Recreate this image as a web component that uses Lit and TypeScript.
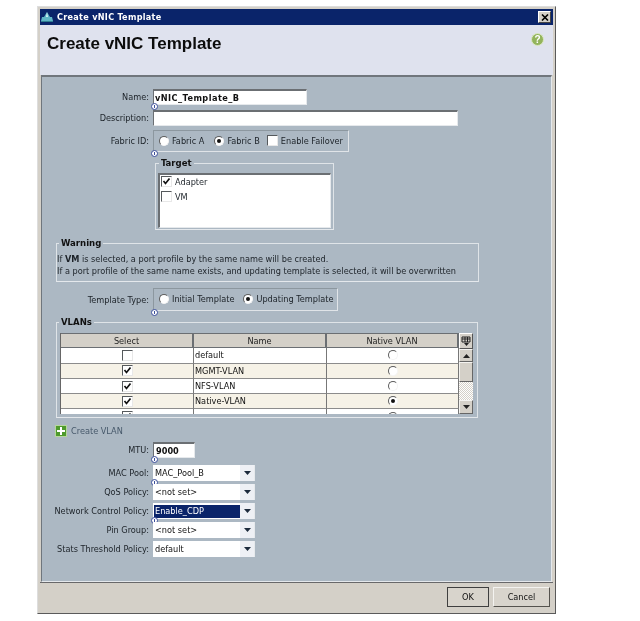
import { LitElement, html, css } from "lit";
import { customElement } from "lit/decorators.js";

@customElement("app-root")
export class AppRoot extends LitElement {
  static styles = css`
    :host { display: block; width: 640px; height: 621px; background: #fff; overflow: hidden;
      font-family: "DejaVu Sans Condensed", "DejaVu Sans", sans-serif; font-size: 9.1px; color: #1c2228; }
    * { box-sizing: border-box; }
    .wrap { padding: 6px 0 0 37px; filter: blur(0.35px); }
    .window { width: 519px; height: 608px; background: #d4d0c8; padding: 2px; display: flex; flex-direction: column;
      border: 1px solid; border-color: #ddd #5a5a5a #5a5a5a #ddd; }
    .title { height: 16px; flex: none; background: #0a246a; color: #fff; font-weight: 700; font-size: 9px;
      display: flex; align-items: center; gap: 4px; padding: 0 2px 0 1px; letter-spacing: .3px; }
    .title svg { flex: none; }
    .title span { flex: 1; }
    .close { width: 13px; height: 12px; background: #d4d0c8; border: 1px solid; border-color: #fff #444 #444 #fff;
      display: flex; align-items: center; justify-content: center; }
    .head { height: 50px; flex: none; background: #dfe2ee; display: flex; justify-content: space-between; padding: 8px 9px 0 7px; }
    h1 { margin: 1px 0 0; font: 700 17px/20px "Liberation Sans", Arial, sans-serif; color: #0c0c0c; }
    .panel { flex: 1; margin: 0 1px; background: #acb8c3; border-top: 2px solid #70767c; border-left: 1px solid #6f767d;
      border-right: 1px solid #e4e8ec; border-bottom: 1px solid #e4e8ec; padding-top: 12px; display: flex; flex-direction: column; }
    .footer { height: 29px; flex: none; background: #d4d0c8; border-top: 1px solid #68686a; display: flex;
      justify-content: flex-end; gap: 4px; padding: 4px 3px 0 0; }
    .btn { height: 20px; color: #111; display: flex; align-items: center; justify-content: center;
      background: #d8d4cc; border: 1px solid; border-color: #f4f3f0 #55534e #55534e #f4f3f0; }
    .ok { width: 42px; outline: 1px solid #3f3f3f; outline-offset: -1px; }
    .cancel { width: 57px; }

    .row { display: flex; align-items: center; flex: none; position: relative; }
    .label { width: 107px; margin-right: 4px; display: flex; justify-content: flex-end; white-space: nowrap; flex: none; }
    .field { height: 16px; background: #fff; padding-left: 1px; display: flex; align-items: center; color: #111;
      border-top: 2px solid #6b6f73; border-left: 1px solid #6b6f73; border-right: 1px solid #e6e9ec; border-bottom: 1px solid #e6e9ec; }
    .bold { font-weight: 700; }
    .w-name { width: 154px; letter-spacing: .45px; } .w-desc { width: 305px; } .w-mtu { width: 42px; padding-left: 2px; }
    .m5 { margin-top: 5px; } .m4 { margin-top: 4px; } .m3 { margin-top: 3px; } .m7 { margin-top: 7px; } .m6 { margin-top: 6px; }

    .info { position: absolute; left: 109px; bottom: -5px; width: 7px; height: 7px; border-radius: 50%;
      border: 1px solid #3c4f9c; background: #fff; }
    .info::after { content: ""; position: absolute; left: 2px; top: 1px; width: 1px; height: 3px; background: #3c4f9c; }

    .group { display: flex; align-items: center; border: 1px solid; border-color: #8c979f #e0e4e8 #e0e4e8 #8c979f;
      padding: 0 0 1px 5px; }
    .g-fabric { width: 196px; height: 22px; }
    .g-template { width: 185px; height: 23px; padding-bottom: 2px; }
    .opt { display: flex; align-items: center; gap: 3px; white-space: nowrap; }
    .g-fabric .opt:first-child { margin-right: 10px; }
    .g-fabric .opt:nth-child(2) { margin-right: 7px; }
    .g-template .opt { margin-right: 9px; }

    .radio { width: 10px; height: 10px; border-radius: 50%; background: #fff; flex: none; position: relative;
      border: 1px solid; border-color: #5c5c5c #f4f4f4 #f4f4f4 #5c5c5c; }
    .radio.on::after { content: ""; position: absolute; left: 2px; top: 2px; width: 4px; height: 4px; border-radius: 50%; background: #111; }
    .check { width: 11px; height: 11px; background: #fff; flex: none; display: block;
      border: 1px solid; border-color: #55595c #e8e8e8 #e8e8e8 #55595c; }
    .check svg { display: block; }

    fieldset { margin: 0; min-width: 0; border: 1px solid; border-color: #dfe4e8 #dfe4e8 #e4e8ec #dfe4e8; flex: none; }
    legend { padding: 0 2px; font-weight: 700; font-size: 9.5px; line-height: 12px; color: #111; }
    .target { margin: 5px 0 0 113px; width: 179px; height: 73px; padding: 4px 2px 0; }
    .target legend { margin-left: 1px; }
    .list { height: 55px; background: #fff; padding: 1px 1px; display: flex; flex-direction: column; gap: 4px;
      border-top: 2px solid #6b6f73; border-left: 2px solid #6b6f73; border-right: 1px solid #e6e9ec; border-bottom: 1px solid #e6e9ec; }
    .warning { margin: 7px 0 0 14px; width: 423px; height: 45px; padding: 4px 0 0; line-height: 12px; }
    .warning legend { margin-left: 2px; }
    .warning p { margin: 0; white-space: nowrap; }

    .vlans { margin: 5px 0 0 14px; width: 422px; height: 102px; padding: 5px 4px 3px 3px; }
    .vlans legend { margin-left: -1px; }
    .tbl { display: flex; height: 81px; overflow: hidden; border-left: 1px solid #666; }
    .grid { flex: 1; display: grid; grid-template-columns: 133px 133px 132px; grid-auto-rows: 15.3px; align-content: start; overflow: hidden; }
    .th { height: 16px; background: #d4d0c8; border-top: 1px solid #6b6f73; border-bottom: 2px solid #6b6f73;
      border-right: 2px solid #6b6f73; display: flex; align-items: center; justify-content: center; color: #222; }
    .td { background: #fff; border-bottom: 1px solid #8c8c8c; border-right: 1px solid #777; display: flex; align-items: center;
      justify-content: center; color: #111; }
    .td.name { justify-content: flex-start; padding-left: 1px; }
    .alt { background: #f6f2e7; }
    .side { width: 14px; flex: none; display: flex; flex-direction: column; }
    .corner { height: 16px; background: #d4d0c8; border: 1px solid; border-color: #fff #555 #555 #fff; display: flex; align-items: center; justify-content: center; }
    .sb { width: 14px; flex: none; background: #d4d0c8; border: 1px solid; border-color: #f4f3f0 #666 #666 #f4f3f0;
      display: flex; align-items: center; justify-content: center; }
    .sb.up { height: 13px; } .sb.thumb { height: 20px; } .sb.down { height: 14px; }
    .track { height: 18px; background: repeating-conic-gradient(#d4d0c8 0 25%, #fff 0 50%) 0 0 / 2px 2px; }

    .create { margin: 7px 0 0 13px; gap: 4px; color: #46586a; }
    .plus { width: 12px; height: 12px; background: #4e9a2d; border: 1px solid #b6d79c; display: flex; align-items: center; justify-content: center; }

    .select { width: 102px; height: 16px; background: #fff; display: flex; align-items: center; color: #111;
      border-right: 1px solid #e6e9ec; }
    .val { flex: 1; height: 13px; margin-left: 1px; padding-left: 1px; display: flex; align-items: center; }
    .val.sel { background: #0a246a; color: #fff; }
    .arrow { width: 14px; flex: none; height: 16px; background: #eef0f5; display: flex; align-items: center; justify-content: center; }
  `;

  private radio(on = false) {
    return html`<span class="radio ${on ? "on" : ""}"></span>`;
  }
  private check(on = false) {
    return html`<span class="check">${on
      ? html`<svg width="9" height="9" viewBox="0 0 9 9"><path d="M1.5 4 L3.5 6.5 L7.5 1.5" fill="none" stroke="#111" stroke-width="1.7"/></svg>`
      : ""}</span>`;
  }
  private arrow() {
    return html`<span class="arrow"><svg width="7" height="4" viewBox="0 0 7 4"><path d="M0 0H7L3.5 4Z" fill="#1c2a3c"/></svg></span>`;
  }
  private sel(label: string, value: string, cls: string, info = false, highlighted = false) {
    return html`<div class="row ${cls}">
      <span class="label">${label}</span>
      <div class="select"><span class="val ${highlighted ? "sel" : ""}">${value}</span>${this.arrow()}</div>
      ${info ? html`<i class="info"></i>` : ""}
    </div>`;
  }

  render() {
    const rows: [string, boolean, boolean][] = [
      ["default", false, false],
      ["MGMT-VLAN", true, false],
      ["NFS-VLAN", true, false],
      ["Native-VLAN", true, true],
      ["", true, false],
    ];
    return html`<div class="wrap"><div class="window">
      <div class="title">
        <svg width="12" height="12" viewBox="0 0 12 12"><path d="M6 1 L9 6 H11 L12 10 H0 L1 6 H3Z" fill="#5fb6c6"/><path d="M6 1 L7 6 H5Z" fill="#d9f0f4"/><path d="M0 10H12V11H0Z" fill="#2f7f92"/></svg>
        <span>Create vNIC Template</span>
        <div class="close"><svg width="8" height="7" viewBox="0 0 8 7"><path d="M1 0.5L7 6.5M7 0.5L1 6.5" stroke="#000" stroke-width="1.6"/></svg></div>
      </div>
      <div class="head">
        <h1>Create vNIC Template</h1>
        <svg width="13" height="13" viewBox="0 0 13 13"><circle cx="6.5" cy="6.5" r="6" fill="#93b45c" stroke="#dbe6c2"/><text x="6.5" y="10" text-anchor="middle" font-family="Liberation Sans" font-weight="700" font-size="10" fill="#fff">?</text></svg>
      </div>
      <div class="panel">
        <div class="row"><span class="label">Name:</span><div class="field bold w-name">vNIC_Template_B</div><i class="info"></i></div>
        <div class="row m5"><span class="label">Description:</span><div class="field w-desc"></div></div>
        <div class="row m4"><span class="label">Fabric ID:</span>
          <div class="group g-fabric">
            <span class="opt">${this.radio()}Fabric A</span>
            <span class="opt">${this.radio(true)}Fabric B</span>
            <span class="opt">${this.check()}Enable Failover</span>
          </div><i class="info"></i></div>
        <fieldset class="target"><legend>Target</legend>
          <div class="list">
            <span class="opt">${this.check(true)}Adapter</span>
            <span class="opt">${this.check()}VM</span>
          </div>
        </fieldset>
        <fieldset class="warning"><legend>Warning</legend>
          <p>If <b>VM</b> is selected, a port profile by the same name will be created.</p>
          <p>If a port profile of the same name exists, and updating template is selected, it will be overwritten</p>
        </fieldset>
        <div class="row m6"><span class="label">Template Type:</span>
          <div class="group g-template">
            <span class="opt">${this.radio()}Initial Template</span>
            <span class="opt">${this.radio(true)}Updating Template</span>
          </div><i class="info"></i></div>
        <fieldset class="vlans"><legend>VLANs</legend>
          <div class="tbl">
            <div class="grid">
              <div class="th">Select</div><div class="th">Name</div><div class="th">Native VLAN</div>
              ${rows.map(([n, c, r], i) => html`
                <div class="td ${i % 2 ? "alt" : ""}">${this.check(c)}</div>
                <div class="td name ${i % 2 ? "alt" : ""}">${n}</div>
                <div class="td ${i % 2 ? "alt" : ""}">${this.radio(r)}</div>`)}
            </div>
            <div class="side">
              <div class="corner"><svg width="10" height="10" viewBox="0 0 10 10"><path d="M1 1H9V6H1ZM1 3H9M4 1V6M6.5 1V6" fill="none" stroke="#222"/><path d="M3 7H8L5.5 10Z" fill="#222"/></svg></div>
              <div class="sb up"><svg width="7" height="4" viewBox="0 0 7 4"><path d="M0 4H7L3.5 0Z" fill="#222"/></svg></div>
              <div class="sb thumb"></div>
              <div class="track"></div>
              <div class="sb down"><svg width="7" height="4" viewBox="0 0 7 4"><path d="M0 0H7L3.5 4Z" fill="#222"/></svg></div>
            </div>
          </div>
        </fieldset>
        <div class="row create">
          <span class="plus"><svg width="8" height="8" viewBox="0 0 8 8"><path d="M3 0H5V3H8V5H5V8H3V5H0V3H3Z" fill="#fff"/></svg></span>
          Create VLAN
        </div>
        <div class="row m5"><span class="label">MTU:</span><div class="field bold w-mtu">9000</div><i class="info"></i></div>
        ${this.sel("MAC Pool:", "MAC_Pool_B", "m7", true)}
        ${this.sel("QoS Policy:", "<not set>", "m3")}
        ${this.sel("Network Control Policy:", "Enable_CDP", "m3", true, true)}
        ${this.sel("Pin Group:", "<not set>", "m3")}
        ${this.sel("Stats Threshold Policy:", "default", "m3")}
      </div>
      <div class="footer"><div class="btn ok">OK</div><div class="btn cancel">Cancel</div></div>
    </div></div>`;
  }
}
